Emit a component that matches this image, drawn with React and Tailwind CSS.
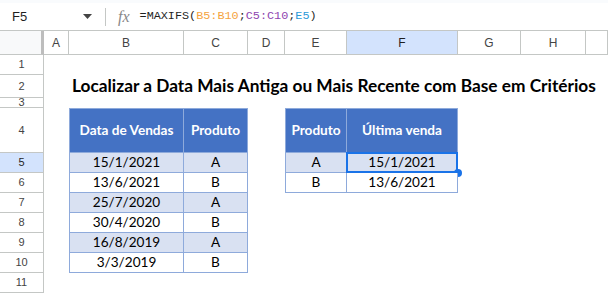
const cols = ['A', 'B', 'C', 'D', 'E', 'F', 'G', 'H', '']
const rowHeights = ['h-[20px]', 'h-[23px]', 'h-[10px]', 'h-[45px]', 'h-[20px]', 'h-[20px]', 'h-[20px]', 'h-[20px]', 'h-[20px]', 'h-[20px]', 'h-[20px]']

const sales = [
  ['15/1/2021', 'A'],
  ['13/6/2021', 'B'],
  ['25/7/2020', 'A'],
  ['30/4/2020', 'B'],
  ['16/8/2019', 'A'],
  ['3/3/2019', 'B'],
]

const latest = [
  ['A', '15/1/2021'],
  ['B', '13/6/2021'],
]

const calibri = "font-['Lato','Open_Sans',sans-serif]"

function HeaderCell({ children, first }) {
  return (
    <div
      className={`flex h-[45px] items-center justify-center border-y border-r border-[#8eaadb] bg-[#4472c4] text-[13.6px] leading-none font-bold text-white ${first ? 'border-l' : ''}`}
    >
      {children}
    </div>
  )
}

function BodyCell({ children, alt, first, selected }) {
  return (
    <div
      className={`relative flex h-[20px] items-center justify-center border-b border-r border-[#8eaadb] text-[13.6px] leading-none text-black ${alt ? 'bg-[#d9e1f2]' : 'bg-white'} ${first ? 'border-l' : ''}`}
    >
      {children}
      {selected && (
        <>
          <div className="pointer-events-none absolute -left-px -top-px bottom-[-1px] right-[-1px] border-2 border-[#1a73e8]" />
          <div className="absolute -bottom-[5px] -right-[5px] h-[8px] w-[8px] rounded-full bg-[#1a73e8]" />
        </>
      )}
    </div>
  )
}

export default function App() {
  return (
    <div className="h-[294px] w-[608px] overflow-hidden bg-white font-['Liberation_Sans',Arial,sans-serif]">
      <div className="bg-[#f9fbfd] pt-[3px]">
        <div className="flex h-[28px] items-center border-b border-[#c4c7c5] bg-white">
          <div className="flex w-[100px] items-center pl-[12px] pr-[8px]">
            <span className="text-[13px] text-[#1f1f1f]">F5</span>
            <svg className="ml-auto" width="9" height="5" viewBox="0 0 9 5">
              <path d="M0 0h9L4.5 5z" fill="#444" />
            </svg>
          </div>
          <div className="ml-[5px] h-[18px] w-px bg-[#c4c7c5]" />
          <span className="ml-[12px] font-['Liberation_Serif',serif] text-[16px] italic text-[#888]">
            fx
          </span>
          <span className="ml-[10px] font-['Liberation_Mono',monospace] text-[11.8px] text-[#1f1f1f]">
            =MAXIFS(
            <span className="text-[#f5a33e]">B5:B10</span>;
            <span className="text-[#8e45b0]">C5:C10</span>;
            <span className="text-[#2c9ad8]">E5</span>)
          </span>
        </div>
      </div>

      <div className="grid grid-cols-[44px_25px_115px_64px_37px_62px_111px_63px_65px_1fr]">
        <div className="h-[24px] border-b border-r-[3px] border-[#c4c7c5] border-r-[#bdbdbd] bg-[#f8f9fa]" />
        {cols.map((c, i) => (
          <div
            key={i}
            className={`flex h-[24px] items-center justify-center border-b border-r border-[#c4c7c5] text-[12px] ${c === 'F' ? 'bg-[#d3e3fd] text-[#1f1f1f]' : 'bg-white text-[#444]'}`}
          >
            {c}
          </div>
        ))}

        {rowHeights.map((h, r) => {
          const n = r + 1
          return (
            <div key={n} className="contents">
              <div
                className={`flex ${h} items-center justify-center overflow-hidden border-b border-r border-[#c4c7c5] text-[11px] ${n === 5 ? 'bg-[#d3e3fd] text-[#1f1f1f]' : 'bg-white text-[#444]'}`}
              >
                {n}
              </div>
              {n === 2 ? (
                <>
                  <div />
                  <div className={`col-span-8 flex h-[23px] items-end pb-[4px] pl-[3px] ${calibri} whitespace-nowrap text-[17.3px] leading-none font-bold text-black`}>
                    Localizar a Data Mais Antiga ou Mais Recente com Base em Critérios
                  </div>
                </>
              ) : n === 4 ? (
                <>
                  <div />
                  <HeaderCell first>
                    <span className={calibri}>Data de Vendas</span>
                  </HeaderCell>
                  <HeaderCell>
                    <span className={calibri}>Produto</span>
                  </HeaderCell>
                  <div />
                  <HeaderCell first>
                    <span className={calibri}>Produto</span>
                  </HeaderCell>
                  <HeaderCell>
                    <span className={calibri}>Última venda</span>
                  </HeaderCell>
                  <div />
                  <div />
                  <div />
                </>
              ) : n >= 5 && n <= 10 ? (
                <>
                  <div />
                  <BodyCell first alt={n % 2 === 1}>
                    <span className={calibri}>{sales[n - 5][0]}</span>
                  </BodyCell>
                  <BodyCell alt={n % 2 === 1}>
                    <span className={calibri}>{sales[n - 5][1]}</span>
                  </BodyCell>
                  <div />
                  {n <= 6 ? (
                    <>
                      <BodyCell first alt={n === 5}>
                        <span className={calibri}>{latest[n - 5][0]}</span>
                      </BodyCell>
                      <BodyCell alt={n === 5} selected={n === 5}>
                        <span className={calibri}>{latest[n - 5][1]}</span>
                      </BodyCell>
                    </>
                  ) : (
                    <>
                      <div />
                      <div />
                    </>
                  )}
                  <div />
                  <div />
                  <div />
                </>
              ) : (
                <div className="col-span-9" />
              )}
            </div>
          )
        })}
      </div>
    </div>
  )
}
